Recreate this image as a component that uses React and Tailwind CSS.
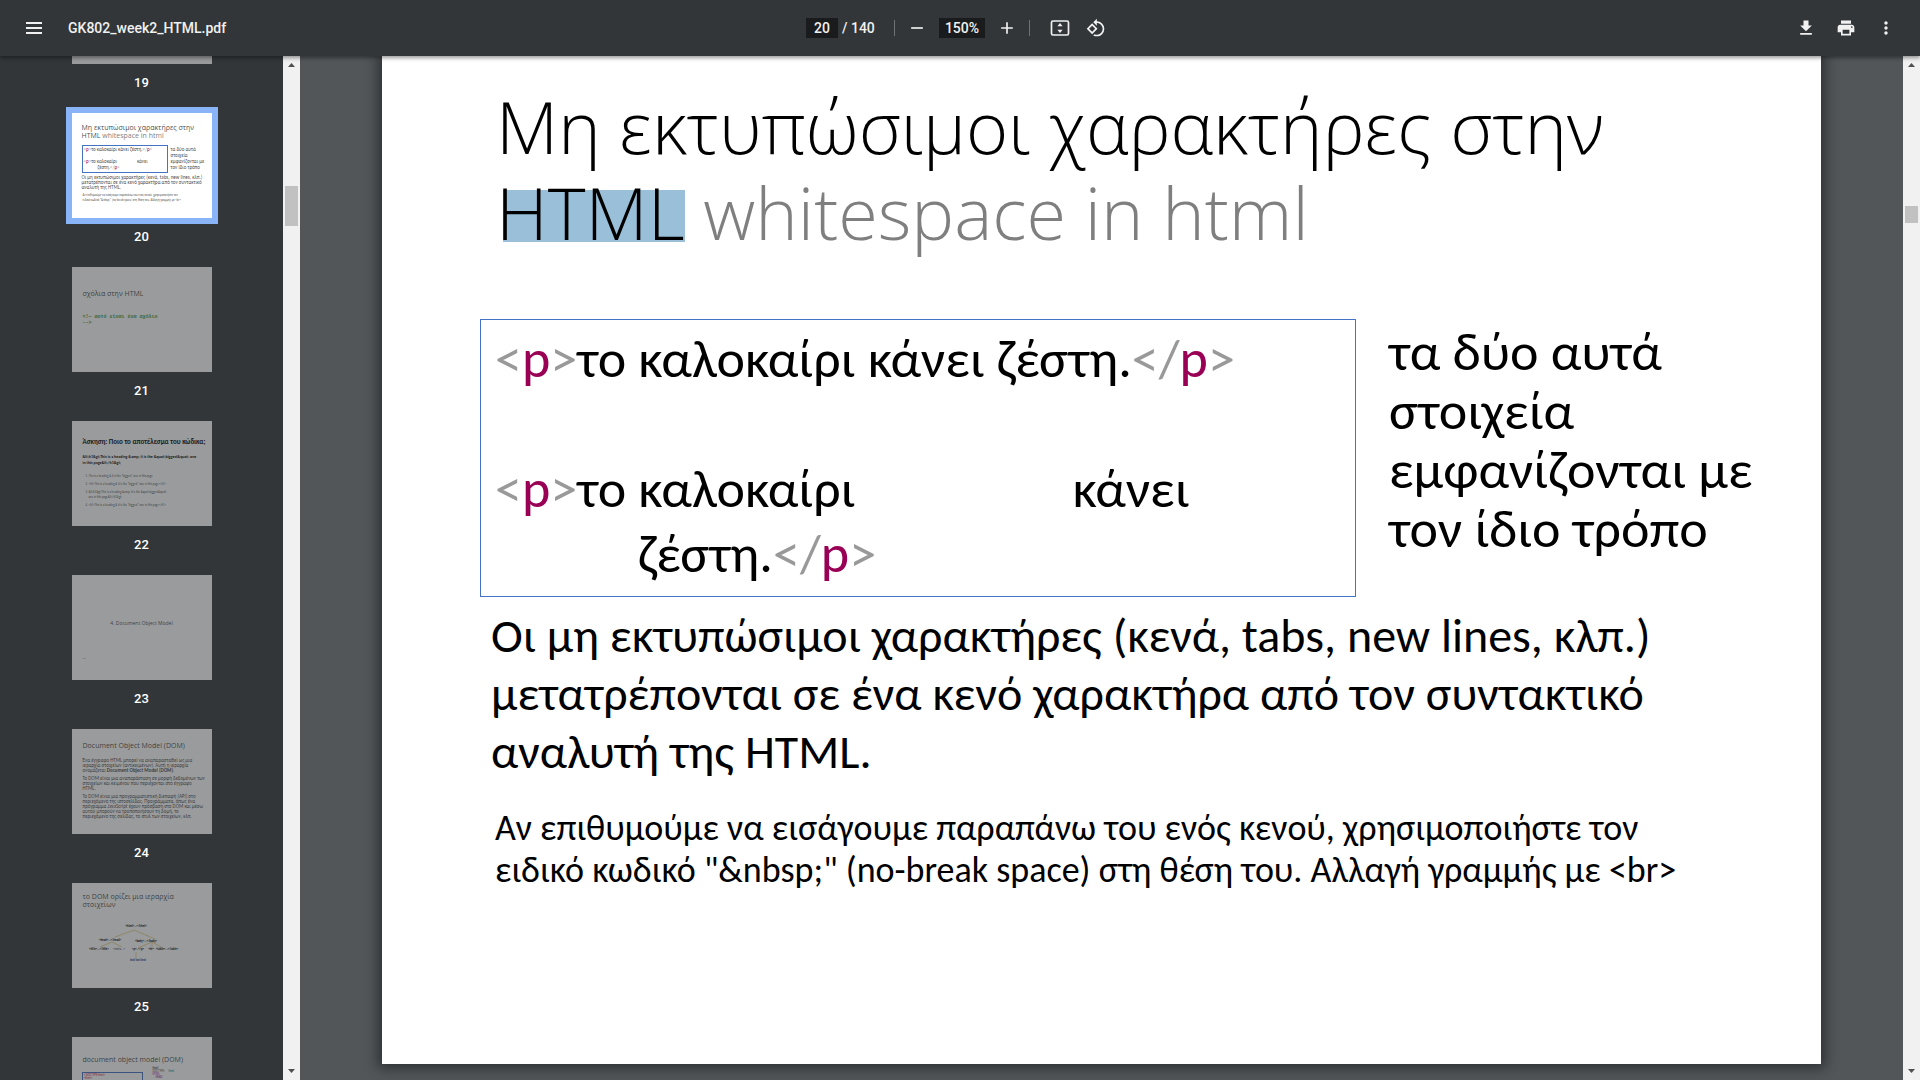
const ICONS = {
  download: "M19 9h-4V3H9v6H5l7 7 7-7zM5 18v2h14v-2H5z",
  print:
    "M19 8H5c-1.66 0-3 1.34-3 3v6h4v4h12v-4h4v-6c0-1.66-1.34-3-3-3zm-3 11H8v-5h8v5zm3-7c-.55 0-1-.45-1-1s.45-1 1-1 1 .45 1 1-.45 1-1 1zm-1-9H6v4h12V3z",
  more: "M12 8c1.1 0 2-.9 2-2s-.9-2-2-2-2 .9-2 2 .9 2 2 2zm0 2c-1.1 0-2 .9-2 2s.9 2 2 2 2-.9 2-2-.9-2-2-2zm0 6c-1.1 0-2 .9-2 2s.9 2 2 2 2-.9 2-2-.9-2-2-2z",
  rotate:
    "M7.34 6.41L.86 12.9l6.49 6.48 6.49-6.48-6.5-6.49zM3.69 12.9l3.66-3.66L11 12.9l-3.66 3.66-3.65-3.66zm15.67-6.26A8.95 8.95 0 0 0 13 4V.76L8.76 5 13 9.24V6c1.79 0 3.58.68 4.95 2.05a7.007 7.007 0 0 1 0 9.9 6.973 6.973 0 0 1-7.79 1.44l-1.49 1.49C10.02 21.62 11.51 22 13 22c2.3 0 4.61-.88 6.36-2.64a8.98 8.98 0 0 0 0-12.72z",
  plus: "M19 13h-6v6h-2v-6H5v-2h6V5h2v6h6v2z",
  minus: "M19 13H5v-2h14v2z",
};

function IconButton({ label, icon, children }) {
  return (
    <button type="button" aria-label={label} className="flex size-9 shrink-0 items-center justify-center rounded-full">
      {children ?? (
        <svg viewBox="0 0 24 24" className="size-5 fill-current">
          <path d={ICONS[icon]} />
        </svg>
      )}
    </button>
  );
}

function Toolbar() {
  return (
    <header className="relative z-10 flex h-14 shrink-0 items-center bg-[#323639] px-4 font-['Roboto',sans-serif] text-sm font-medium text-[#f1f1f1] shadow-[0_2px_4px_rgba(0,0,0,0.4)]">
      <div className="flex flex-1 items-center gap-4">
        <IconButton label="Menu">
          <svg viewBox="0 0 16 12" className="h-3 w-4 fill-current">
            <path d="M0 0h16v2H0zM0 5h16v2H0zM0 10h16v2H0z" />
          </svg>
        </IconButton>
        <h1>GK802_week2_HTML.pdf</h1>
      </div>
      <div className="flex items-center">
        <input aria-label="Page number" defaultValue="20" className="h-5 w-8 bg-[#191b1c] text-center" />
        <span className="ml-1 w-8 whitespace-nowrap">/ 140</span>
        <span className="ml-5 mr-1 h-4 w-px bg-[#6f7274]" />
        <IconButton label="Zoom out" icon="minus" />
        <input aria-label="Zoom level" defaultValue="150%" className="mx-1 h-5 w-[46px] bg-[#191b1c] text-center" />
        <IconButton label="Zoom in" icon="plus" />
        <span className="ml-1 mr-3 h-4 w-px bg-[#6f7274]" />
        <IconButton label="Fit to page">
          <svg viewBox="0 0 20 16" className="h-4 w-5">
            <rect x="1.5" y="1" width="17" height="14" rx="1.5" fill="none" stroke="currentColor" strokeWidth="1.7" />
            <path d="M10 3l2.6 3.2H7.4zM10 13l2.6-3.2H7.4z" fill="currentColor" />
          </svg>
        </IconButton>
        <IconButton label="Rotate counterclockwise" icon="rotate" />
      </div>
      <div className="flex flex-1 items-center justify-end gap-1">
        <IconButton label="Download" icon="download" />
        <IconButton label="Print" icon="print" />
        <IconButton label="More actions" icon="more" />
      </div>
    </header>
  );
}

function Scrollbar({ thumb }) {
  return (
    <div className="flex w-[17px] shrink-0 flex-col items-center bg-[#f1f1f1] text-[#505050]">
      <svg viewBox="0 0 17 17" className="size-[17px] shrink-0 fill-current">
        <path d="M5 11h7L8.500 7z" />
      </svg>
      <div className="w-full flex-1 px-0.5">
        <div className={`bg-[#c1c1c1] ${thumb}`} />
      </div>
      <svg viewBox="0 0 17 17" className="size-[17px] shrink-0 fill-current">
        <path d="M5 6h7l-3.500 4z" />
      </svg>
    </div>
  );
}

const THUMB_TITLE = "font-['Open_Sans',sans-serif] text-[7px] leading-[8px]";

function Tag({ close }) {
  return (
    <>
      <span className="text-[#999]">{close ? "</" : "<"}</span>
      <span className="text-[#905]">p</span>
      <span className="text-[#999]">&gt;</span>
    </>
  );
}

function Thumb20() {
  return (
    <div className="pl-[10px] pt-[11px] text-[5px]">
      <p className={THUMB_TITLE}>
        Μη εκτυπώσιμοι χαρακτήρες στην
        <br />
        HTML <span className="text-[#7f7f7f]">whitespace in html</span>
      </p>
      <div className="mt-[5px] flex gap-[3px]">
        <div className="h-[28px] w-[86px] border border-[#4472c4] pl-px leading-[6px]">
          <p><Tag />το καλοκαίρι κάνει ζέστη.<Tag close /></p>
          <p className="mt-[6px]"><Tag />το καλοκαίρι<span className="ml-[20px]">κάνει</span></p>
          <p className="pl-[14px]">ζέστη.<Tag close /></p>
        </div>
        <p className="whitespace-nowrap pt-px leading-[6px]">
          τα δύο αυτά<br />στοιχεία<br />εμφανίζονται με<br />τον ίδιο τρόπο
        </p>
      </div>
      <p className="mt-[2px] whitespace-nowrap leading-[5px]">
        Οι μη εκτυπώσιμοι χαρακτήρες (κενά, tabs, new lines, κλπ.)
        <br />μετατρέπονται σε ένα κενό χαρακτήρα από τον συντακτικό
        <br />αναλυτή της HTML.
      </p>
      <p className="mt-[3px] pl-px text-[3px] leading-[5px]">
        Αν επιθυμούμε να εισάγουμε παραπάνω του ενός κενού, χρησιμοποιήστε τον
        <br />ειδικό κωδικό "&amp;nbsp;" (no-break space) στη θέση του. Αλλαγή γραμμής με &lt;br&gt;
      </p>
    </div>
  );
}

function Thumb21() {
  return (
    <div className="pl-[11px] pt-[23px]">
      <p className={THUMB_TITLE}>σχόλια στην HTML</p>
      <p className="mt-[16px] font-['Liberation_Mono',monospace] text-[5px] font-bold leading-[6px] text-[#007a00]/80">
        &lt;!— αυτό είναι ένα σχόλιο<br />--&gt;
      </p>
    </div>
  );
}

function Thumb22() {
  return (
    <div className="pl-[11px] pt-[17px] text-[5px] leading-[6px]">
      <p className="text-[7px] font-bold leading-[8px] text-black">Άσκηση: Ποιο το αποτέλεσμα του κώδικα;</p>
      <p className="mt-[8px] whitespace-nowrap text-[4px] font-bold text-black">
        &amp;lt;h1&amp;gt;This is a heading &amp;amp; it is the &amp;quot;biggest&amp;quot; one
        <br />in this page&amp;lt;/h1&amp;gt;
      </p>
      <ol className="mt-[8px] flex list-decimal flex-col gap-[3px] pl-[6px] text-[3px] leading-[5px]">
        <li>This is a heading &amp; it is the "biggest" one in this page</li>
        <li>&lt;h1&gt;This is a heading &amp; it is the "biggest" one in this page&lt;/h1&gt;</li>
        <li>&amp;lt;h1&amp;gt;This is a heading &amp;amp; it is the &amp;quot;biggest&amp;quot;<br />one in this page&amp;lt;/h1&amp;gt;</li>
        <li>&lt;h1&gt;This is a heading &amp; it is the "biggest" one in this page&lt;/h1&gt;</li>
      </ol>
    </div>
  );
}

function Thumb23() {
  return (
    <div className="pt-[44px]">
      <p className="text-center font-['Open_Sans',sans-serif] text-[5px] leading-[8px]">4. Document Object Model</p>
      <p className="mt-[29px] pl-[11px] text-[4px] leading-[5px]">—</p>
    </div>
  );
}

function Thumb24() {
  return (
    <div className="whitespace-nowrap pl-[11px] pt-[13px] text-[5px] leading-[5px]">
      <p className={THUMB_TITLE}>Document Object Model (DOM)</p>
      <div className="mt-[8px] flex flex-col gap-[3px]">
        <p>
          Ένα έγγραφο HTML μπορεί να αναπαρασταθεί ως μια<br />ιεραρχία στοιχείων (αντικειμένων). Αυτή η ιεραρχία
          <br />ονομάζεται <b>Document Object Model (DOM)</b>.
        </p>
        <p>
          Το DOM είναι μια αναπαράσταση σε μορφή δεδομένων των<br />στοιχείων και κειμένου που περιέχονται στο έγγραφο
          <br />HTML.
        </p>
        <p>
          Το DOM είναι μια προγραμματιστική διεπαφή (API) στο<br />περιεχόμενο της ιστοσελίδας. Προγράμματα, όπως ένα
          <br />πρόγραμμα JavaScript έχουν πρόσβαση στο DOM και μέσω<br />αυτού μπορούν να τροποποιήσουν τη δομή, το
          <br />περιεχόμενο της σελίδας, το στυλ των στοιχείων, κλπ.
        </p>
      </div>
    </div>
  );
}

function Thumb25() {
  return (
    <div className="pt-[10px]">
      <p className={`pl-[11px] ${THUMB_TITLE}`}>
        το DOM ορίζει μια ιεραρχία<br />στοιχείων
      </p>
      <svg viewBox="0 26 140 60" className="h-[60px] w-[140px] text-[3px] font-bold" textAnchor="middle">
        <path
          d="M62 47L43 54M62 47L83 56M40 59L28 64M40 59L50 64M80 59L66 65M80 59V65M80 59L91 65M64 69V75"
          fill="none"
          stroke="#e0b850"
          strokeWidth="0.6"
        />
        <text x="64" y="44">&lt;html&gt;...&lt;/html&gt;</text>
        <text x="38" y="58">&lt;head&gt;...&lt;/head&gt;</text>
        <text x="74" y="59">&lt;body&gt;...&lt;/body&gt;</text>
        <text x="27" y="67">&lt;title&gt;...&lt;/title&gt;</text>
        <text x="47" y="67" fill="#777">&lt;meta...&gt;</text>
        <text x="66" y="67">&lt;p&gt;..&lt;/p&gt;</text>
        <text x="79" y="67">&lt;hr&gt;</text>
        <text x="95" y="67">&lt;table&gt;...&lt;/table&gt;</text>
        <text x="66" y="78" fill="#223388">text text text</text>
      </svg>
    </div>
  );
}

function Thumb26() {
  return (
    <div className="pl-[10px] pt-[19px]">
      <p className={`pl-px ${THUMB_TITLE}`}>document object model (DOM)</p>
      <div className="mt-[8px] flex gap-[10px] text-[3px] leading-[3px]">
        <div className="h-[60px] w-[61px] border border-[#4472c4] pl-px pt-px text-[#d01030]">
          &lt;!DOCTYPE html&gt;<br />&lt;html&gt;
        </div>
        <div className="-mt-[5px]">
          <b>html</b>
          <p>DOCTYPE: <span className="pl-[3px] text-[#008080]">html</span></p>
          <p className="text-[#a000a0]">HTML</p>
          <p className="pl-[3px] text-[#a000a0]">HEAD</p>
        </div>
      </div>
    </div>
  );
}

const PAGES = [
  { n: 19 },
  { n: 20, Content: Thumb20 },
  { n: 21, Content: Thumb21 },
  { n: 22, Content: Thumb22 },
  { n: 23, Content: Thumb23 },
  { n: 24, Content: Thumb24 },
  { n: 25, Content: Thumb25 },
  { n: 26, Content: Thumb26 },
];

function Sidebar({ current }) {
  return (
    <nav aria-label="Page thumbnails" className="flex w-[300px] shrink-0 bg-[#323639]">
      <ul className="-mt-[103px] flex flex-1 flex-col items-center">
        {PAGES.map(({ n, Content }) => (
          <li key={n} className="mb-[11px] shrink-0">
            <button type="button" className="block w-[152px] text-left">
              <span className={`block h-[117px] border-[6px] ${n === current ? "border-[#8ab4f8]" : "border-transparent"}`}>
                <span
                  className={`block h-full overflow-hidden bg-white font-['Carlito','Open_Sans',sans-serif] text-black/75 ${n === current ? "" : "opacity-50"}`}
                >
                  {Content && <Content />}
                </span>
              </span>
              <span className="block text-center font-['Roboto',sans-serif] text-[13px] font-medium leading-[26px] text-white">{n}</span>
            </button>
          </li>
        ))}
      </ul>
      <Scrollbar thumb="mt-[113px] h-10" />
    </nav>
  );
}

function Slide() {
  return (
    <article className="h-fit flex-1 bg-white pb-[173px] pl-[98px] pt-[27px] font-['Carlito','Open_Sans',sans-serif] text-black shadow-[0_0_12px_4px_rgba(0,0,0,0.45)]">
      <h2 className="whitespace-nowrap pl-4 font-['Open_Sans',sans-serif] text-[72px] font-[340] leading-[86px]">
        Μη εκτυπώσιμοι χαρακτήρες στην
        <br />
        <mark className="inline-block bg-transparent bg-[linear-gradient(#9ac0d9,#9ac0d9)] bg-[length:182px_52px] bg-right bg-no-repeat pb-2 leading-[44px] text-black">
          HTML
        </mark>{" "}
        <span className="text-[#7f7f7f]">whitespace in html</span>
      </h2>
      <div className="mt-16 flex text-[54px]">
        <div className="flex-1 whitespace-nowrap border border-[#4472c4] pb-[9px] pl-[14px] pt-[7px] leading-[65px]">
          <p><Tag />το καλοκαίρι κάνει ζέστη.<Tag close /></p>
          <p className="mt-[65px]"><Tag />το καλοκαίρι<span className="ml-[217px]">κάνει</span></p>
          <p className="pl-[143px]">ζέστη.<Tag close /></p>
        </div>
        <p className="ml-[33px] w-[432px] pt-1 leading-[59px]">
          τα δύο αυτά<br />στοιχεία<br />εμφανίζονται με<br />τον ίδιο τρόπο
        </p>
      </div>
      <p className="mt-[10px] whitespace-nowrap pl-[11px] text-5xl leading-[58px]">
        Οι μη εκτυπώσιμοι χαρακτήρες (κενά, tabs, new lines, κλπ.)
        <br />μετατρέπονται σε ένα κενό χαρακτήρα από τον συντακτικό
        <br />αναλυτή της HTML.
      </p>
      <p className="mt-[26px] whitespace-nowrap pl-[15px] text-4xl leading-[42px]">
        Αν επιθυμούμε να εισάγουμε παραπάνω του ενός κενού, χρησιμοποιήστε τον
        <br />ειδικό κωδικό "&amp;nbsp;" (no-break space) στη θέση του. Αλλαγή γραμμής με &lt;br&gt;
      </p>
    </article>
  );
}

export default function App() {
  return (
    <div className="flex h-screen flex-col overflow-hidden bg-[#525659]">
      <Toolbar />
      <div className="flex min-h-0 flex-1 overflow-hidden">
        <Sidebar current={20} />
        <main className="flex min-w-0 flex-1 items-start overflow-hidden px-[82px]">
          <Slide />
        </main>
        <Scrollbar thumb="mt-[133px] h-[17px]" />
      </div>
    </div>
  );
}
